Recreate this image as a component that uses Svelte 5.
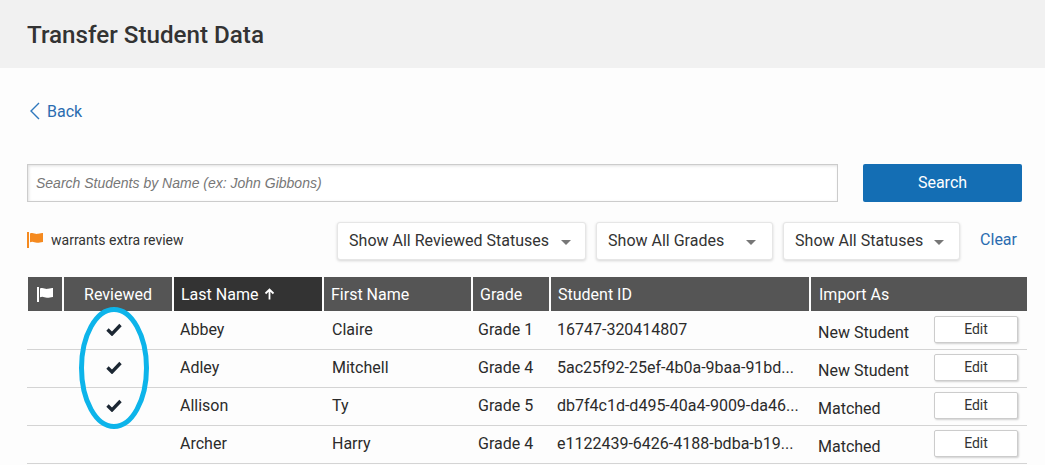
<script>
  const rows = [
    { reviewed: true, last: 'Abbey', first: 'Claire', grade: 'Grade 1', id: '16747-320414807', status: 'New Student' },
    { reviewed: true, last: 'Adley', first: 'Mitchell', grade: 'Grade 4', id: '5ac25f92-25ef-4b0a-9baa-91bd...', status: 'New Student' },
    { reviewed: true, last: 'Allison', first: 'Ty', grade: 'Grade 5', id: 'db7f4c1d-d495-40a4-9009-da46...', status: 'Matched' },
    { reviewed: false, last: 'Archer', first: 'Harry', grade: 'Grade 4', id: 'e1122439-6426-4188-bdba-b19...', status: 'Matched' }
  ];
  const filters = [
    { label: 'Show All Reviewed Statuses', cls: 'f1' },
    { label: 'Show All Grades', cls: 'f2' },
    { label: 'Show All Statuses', cls: 'f3' }
  ];
</script>

<div class="page">
  <header class="top"><h1>Transfer Student Data</h1></header>
  <main class="content">
    <a class="back" href="#back">
      <svg width="11" height="18" viewBox="0 0 11 18"><path d="M10 1 L2 9 L10 17" fill="none" stroke="#2f78bd" stroke-width="1.4"/></svg>
      Back
    </a>
    <div class="search">
      <div class="input">Search Students by Name (ex: John Gibbons)</div>
      <button class="go">Search</button>
    </div>
    <div class="tools">
      <div class="legend">
        <svg width="17" height="16" viewBox="0 0 17 16"><path d="M0 0h2v16H0z" fill="#f58a1f"/><path d="M3 1.5c3-1.5 5 1 8 .3 2-.4 4-.8 5-.8v9c-3 .3-4 1-6 .8-3-.3-4-2-7-.5z" fill="#f58a1f"/></svg>
        <span>warrants extra review</span>
      </div>
      <div class="filters">
        {#each filters as f}
          <div class="select {f.cls}"><span>{f.label}</span><i class="caret"></i></div>
        {/each}
        <a class="clear" href="#clear">Clear</a>
      </div>
    </div>
    <div class="table">
      <div class="row head">
        <div class="th c"><svg width="17" height="15" viewBox="0 0 17 15"><path d="M0 0h2v15H0z" fill="#fff"/><path d="M3 1.5c3-1.5 5 1 8 .3 2-.4 4-.8 5-.8v9c-3 .3-4 1-6 .8-3-.3-4-2-7-.5z" fill="#fff"/></svg></div>
        <div class="th c">Reviewed</div>
        <div class="th sorted">Last Name
          <svg width="11" height="12" viewBox="0 0 11 12"><path d="M5.5 11.5V2M1.5 5.5l4-4 4 4" fill="none" stroke="#fff" stroke-width="1.8"/></svg>
        </div>
        <div class="th">First Name</div>
        <div class="th">Grade</div>
        <div class="th">Student ID</div>
        <div class="th imp">Import As</div>
      </div>
      {#each rows as r}
        <div class="row body">
          <div></div>
          <div class="td c">
            {#if r.reviewed}
              <svg width="16" height="13" viewBox="0 0 16 13"><path d="M1.5 6.5l4.5 4.5L14.5 2" fill="none" stroke="#1c2733" stroke-width="3.3"/></svg>
            {/if}
          </div>
          <div class="td">{r.last}</div>
          <div class="td first">{r.first}</div>
          <div class="td grade">{r.grade}</div>
          <div class="td">{r.id}</div>
          <div class="td imp stat">
            <span class="st">{r.status}</span>
            <button class="edit">Edit</button>
          </div>
        </div>
      {/each}
      <svg class="ring" width="72" height="124" viewBox="0 0 72 124"><ellipse cx="36" cy="62" rx="32.5" ry="58.5" fill="none" stroke="#0db4ea" stroke-width="5"/></svg>
    </div>
  </main>
</div>

<style>
  :global(body) { margin: 0; background: #fdfdfd; }
  .page { width: 1045px; height: 465px; overflow: hidden; font-family: Roboto, "Liberation Sans", sans-serif; color: #2b2b2b; background: #fdfdfd; }
  .top { height: 68px; background: #f1f1f1; display: flex; align-items: center; padding-left: 27px; box-sizing: border-box; }
  h1 { margin: 0; font-size: 24.2px; font-weight: 500; color: #333; line-height: 32px; position: relative; top: 1px; }
  .content { padding: 32px 18px 0 27px; }
  .back { display: flex; align-items: center; gap: 7px; height: 22px; color: #2a6cb0; text-decoration: none; font-size: 16px; padding-left: 2px; }
  .search { display: flex; gap: 25px; margin-top: 42px; }
  .input { width: 811px; height: 38px; box-sizing: border-box; border: 1px solid #ccc; background: #fff; box-shadow: inset 1px 1px 3px rgba(0,0,0,.12); display: flex; align-items: center; padding-left: 8px; font-family: "Liberation Sans", Arial, sans-serif; font-style: italic; font-size: 14px; color: #777; }
  .go { width: 159px; height: 38px; border: 0; border-radius: 2px; background: #146eb4; color: #fff; font-family: inherit; font-size: 16px; padding: 0 0 2px; }
  .tools { display: flex; justify-content: space-between; align-items: center; margin-top: 20px; height: 38px; }
  .legend { display: flex; align-items: center; gap: 7px; font-size: 14px; color: #333; position: relative; top: -1px; }
  .filters { display: flex; align-items: center; gap: 10px; }
  .select { box-sizing: border-box; height: 38px; display: flex; align-items: center; justify-content: space-between; background: #fff; border-radius: 3px; border: 1px solid #e6e6e6; box-shadow: 0 1px 3px rgba(0,0,0,.16); font-size: 16px; color: #333; padding: 0 14px 0 11px; }
  .select span { position: relative; top: -1px; }
  .f1 { width: 249px; }
  .f2 { width: 177px; padding-right: 16px; }
  .f3 { width: 177px; padding-right: 15px; }
  .caret { width: 0; height: 0; border-left: 5px solid transparent; border-right: 5px solid transparent; border-top: 5px solid #777; margin-top: 2px; }
  .clear { color: #2a6cb0; text-decoration: none; font-size: 16px; margin-left: 10px; position: relative; top: -2px; padding-right: 10px; }
  .table { position: relative; margin-top: 17px; width: 1000px; }
  .row { display: grid; grid-template-columns: 37px 110px 150px 149px 78px 260px 216px; }
  .head { height: 34px; margin-bottom: 1px; }
  .th { background: #555; color: #fff; font-size: 16px; display: flex; align-items: center; padding-left: 7px; margin-right: 2px; gap: 6px; }
  .th:first-child { margin-left: 1px; }
  .th.c { justify-content: center; padding-left: 0; }
  .th.sorted { background: #333; }
  .th.imp { margin-right: 0; padding-left: 8px; }
  .body { height: 38px; border-bottom: 1px solid #d4d4d4; box-sizing: border-box; font-size: 16px; color: #2b2b2b; }
  .td { display: flex; align-items: center; padding-left: 6px; padding-bottom: 2px; white-space: nowrap; }
  .td.first { padding-left: 8px; }
  .td.grade { padding-left: 5px; }
  .td.c { justify-content: center; padding: 0 8px 3px 0; margin-right: 2px; }
  .stat { justify-content: space-between; padding-left: 7px; padding-right: 9px; padding-bottom: 0; }
  .st { position: relative; top: 2px; }
  .edit { width: 84px; height: 27px; background: #fff; border: 1px solid #ccc; border-radius: 2px; box-shadow: 1px 1px 2px rgba(0,0,0,.18); font-family: inherit; font-size: 14px; color: #333; padding: 0; margin-top: -3px; }
  .ring { position: absolute; left: 51px; top: 29px; pointer-events: none; }
</style>
